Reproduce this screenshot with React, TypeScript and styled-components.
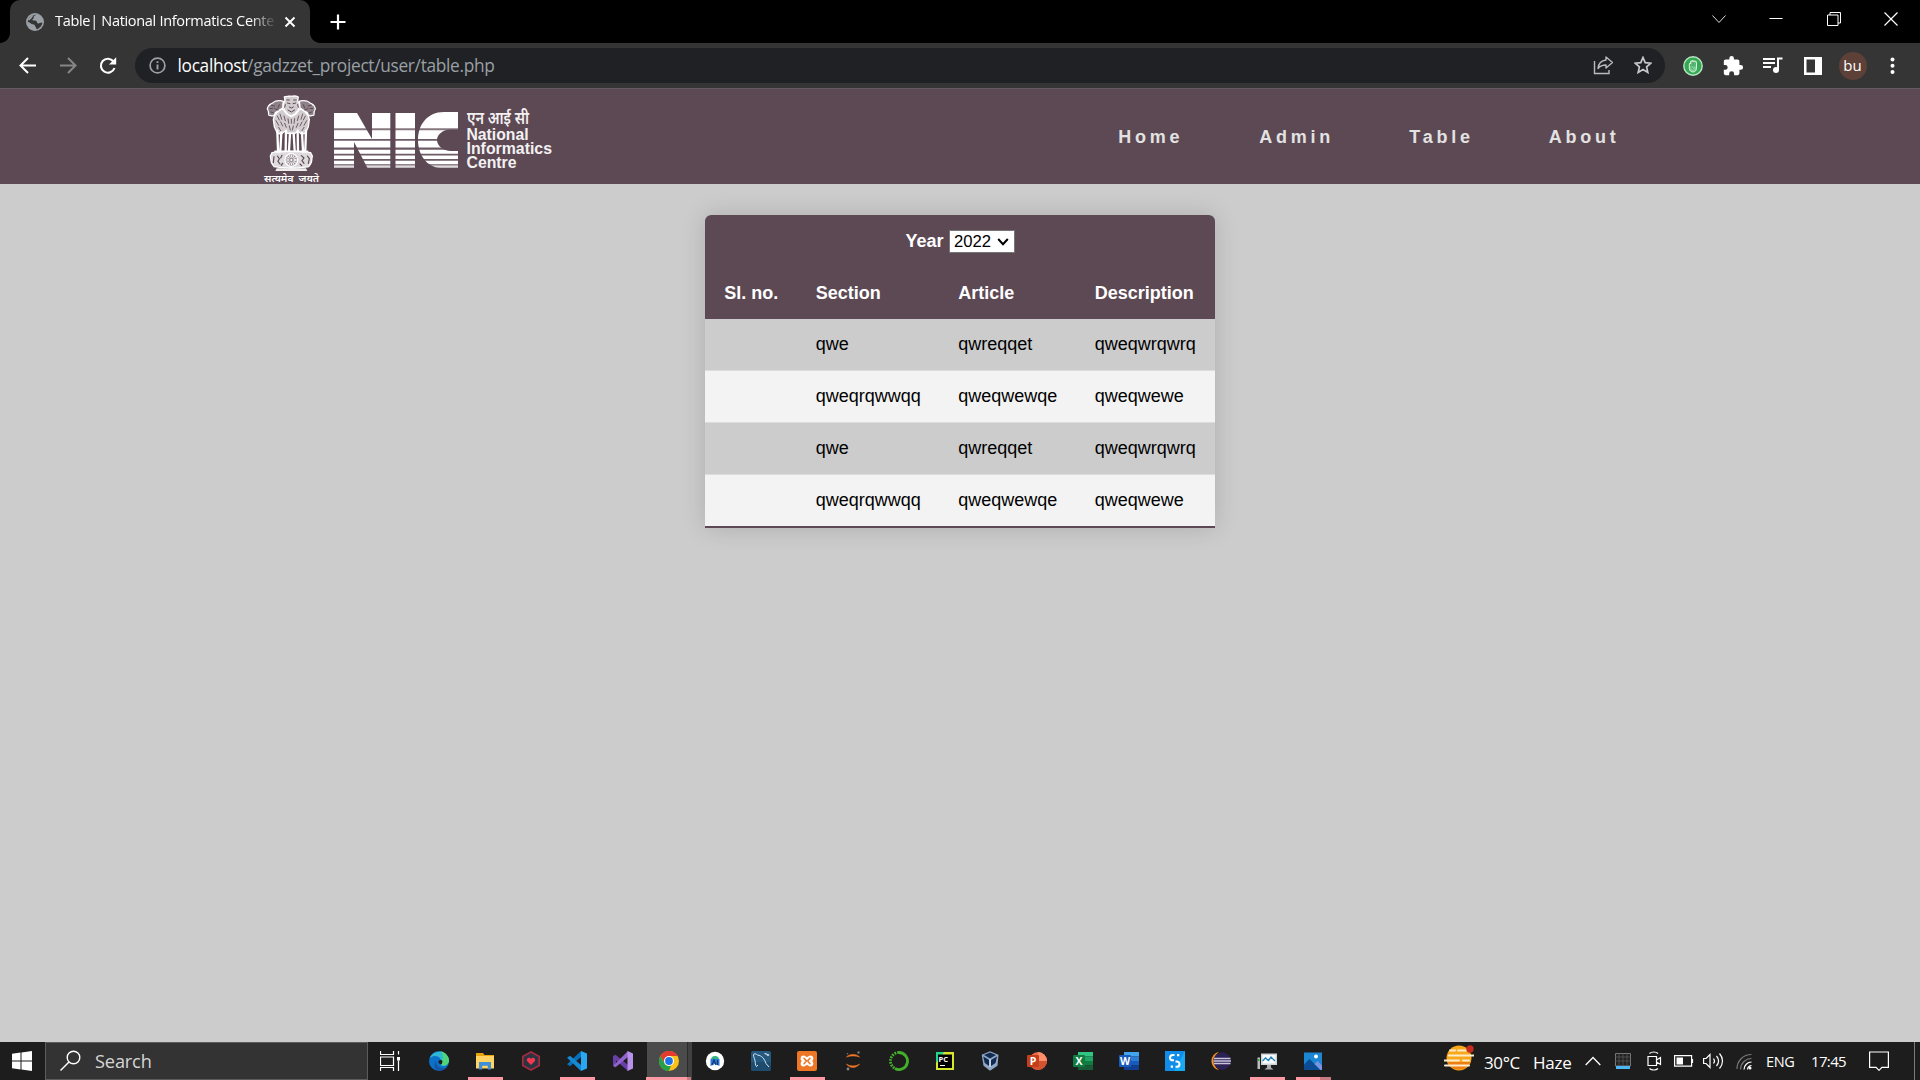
import React from 'react';
import styled, { createGlobalStyle } from 'styled-components';

const GlobalStyle = createGlobalStyle`
  * { box-sizing: border-box; }
  html, body { margin: 0; padding: 0; background: #ccc; }
  body { overflow: hidden; }
  svg { display: block; flex: none; }
`;

const ui = `"Open Sans", "Noto Sans", sans-serif`;
const plum = '#5d4954';

const Screen = styled.div`
  width: 1920px;
  height: 1080px;
  display: flex;
  flex-direction: column;
  overflow: hidden;
  background: #cccccc;
  font-family: "Liberation Sans", Arial, sans-serif;
`;

/* ---------- browser chrome ---------- */
const TabStrip = styled.div`
  height: 43px;
  flex: none;
  background: #000;
  display: flex;
  align-items: stretch;
`;
const TabShape = styled.div`
  width: 300px;
  background: #353535;
  border-radius: 10px 10px 0 0;
  display: flex;
  align-items: center;
  padding: 0 14px 0 16px;
`;
const TabFoot = styled.div<{ $side: 'left' | 'right' }>`
  width: 10px;
  height: 10px;
  align-self: flex-end;
  background: radial-gradient(circle at ${p => (p.$side === 'left' ? '0 0' : '100% 0')}, #000 9.5px, #353535 10.2px);
`;
const TabTitle = styled.div`
  width: 220px;
  margin-left: 11px;
  margin-top: -1px;
  overflow: hidden;
  white-space: nowrap;
  color: #fff;
  font: 14.5px/20px ${ui};
  letter-spacing: -0.31px;
  mask-image: linear-gradient(90deg, #000 195px, transparent 222px);
`;
const TabClose = styled.div`
  margin-left: 9px;
`;
const NewTab = styled.div`
  width: 35px;
  display: flex;
  align-items: center;
  justify-content: center;
`;
const WindowButtons = styled.div`
  margin-left: auto;
  display: flex;
`;
const WindowButton = styled.div`
  width: 57.5px;
  height: 37px;
  display: flex;
  align-items: center;
  justify-content: center;
`;
const Toolbar = styled.div`
  height: 46px;
  flex: none;
  background: #353535;
  border-bottom: 1px solid #635d60;
  display: flex;
  align-items: center;
  padding: 0 7.5px;
`;
const ToolSlot = styled.div<{ $w?: number }>`
  width: ${p => p.$w ?? 40}px;
  height: 40px;
  display: flex;
  flex: none;
  align-items: center;
  justify-content: center;
`;
const Omnibox = styled.div`
  height: 35px;
  width: 1530px;
  margin: -1px 7.5px 0 7.5px;
  flex: none;
  border-radius: 18px;
  background: #202124;
  display: flex;
  align-items: center;
  padding: 0 2.5px 0 14px;
`;
const Url = styled.div`
  flex: 1;
  margin-left: 11.5px;
  padding-top: 2px;
  color: #9aa0a6;
  font: 17.3px/24px ${ui};
  letter-spacing: -0.31px;
  span { color: #fff; }
`;
const Avatar = styled.div`
  width: 28px;
  height: 28px;
  border-radius: 50%;
  background: #5d4037;
  color: #fff;
  text-align: center;
  font: 15px/26px ${ui};
`;

/* ---------- page ---------- */
const Nav = styled.nav`
  height: 95px;
  flex: none;
  background: ${plum};
  display: flex;
  overflow: hidden;
`;
const Logo = styled.div`
  width: 320px;
  margin-left: 250px;
  color: #fff;
`;
const NavLinks = styled.div`
  margin-left: 548.3px;
  display: flex;
  align-items: center;
`;
const NavLink = styled.a<{ $w: number }>`
  width: ${p => p.$w}px;
  color: #e2e2e2;
  font-weight: bold;
  font-size: 18px;
  line-height: 24px;
  letter-spacing: 3.75px;
  white-space: nowrap;
`;
const Main = styled.main`
  flex: 1;
  display: flex;
  justify-content: center;
  align-items: flex-start;
  padding: 31.25px 0 0 0;
`;
const Table = styled.table`
  width: 493.3px;
  border-collapse: collapse;
  font-size: 18px;
  line-height: 20.75px;
  color: #000;
  border-radius: 6.25px 6.25px 0 0;
  overflow: hidden;
  box-shadow: 0 0 25px rgba(0, 0, 0, 0.15);
`;
const HeadRow = styled.tr`
  background: ${plum};
  color: #fff;
  text-align: left;
  height: 52px;
`;
const BodyRow = styled.tr<{ $even: boolean; $h: number; $last: boolean }>`
  height: ${p => p.$h}px;
  background: ${p => (p.$even ? '#f3f3f3' : '#cccccc')};
  border-bottom: ${p => (p.$last ? `2px solid ${plum}` : '1px solid #dddddd')};
`;
const HeadCell = styled.th`
  padding: 0 18.75px;
  white-space: nowrap;
`;
const Cell = styled.td`
  padding: 0 18.75px 1px;
  white-space: nowrap;
`;
const YearField = styled.div`
  display: flex;
  align-items: center;
  justify-content: center;
  gap: 5px;
`;
const YearSelect = styled.div`
  width: 66px;
  height: 23px;
  border: 1px solid #767676;
  background: #fff;
  color: #000;
  font-weight: normal;
  font-size: 16.67px;
  line-height: 21px;
  display: flex;
  align-items: center;
  justify-content: space-between;
  padding: 1px 5px 0 4.5px;
`;

/* ---------- taskbar ---------- */
const Taskbar = styled.div`
  height: 38px;
  flex: none;
  background: #1d1d1d;
  display: flex;
  font-family: ${ui};
  color: #fff;
`;
const StartButton = styled.div`
  width: 45px;
  display: flex;
  align-items: center;
  padding-left: 12px;
`;
const SearchBox = styled.div`
  width: 323px;
  border: 1px solid #5c5c5c;
  background: #333;
  display: flex;
  align-items: center;
  padding-left: 13px;
  gap: 14px;
  font-size: 18.2px;
  letter-spacing: -0.15px;
  color: #d6d6d6;
`;
const AppSlot = styled.div<{ $w?: number; $active?: boolean; $pull?: number }>`
  width: ${p => p.$w ?? 46}px;
  padding-top: 9px;
  padding-right: ${p => p.$pull ?? 0}px;
  display: flex;
  flex-direction: column;
  align-items: center;
  justify-content: space-between;
  background: ${p =>
    p.$active ? 'linear-gradient(90deg, transparent 1px, #4b4b4b 1px, #4b4b4b 41px, #2b2b2b 41px, #2b2b2b 42px, #404040 42px)' : 'none'};
`;
const Underline = styled.div<{ $w: number; $dim?: number }>`
  width: ${p => p.$w}px;
  height: 3px;
  background: linear-gradient(90deg, #ff99a4 ${p => p.$w - (p.$dim ?? 0)}px, #c87a84 0);
`;
const Tray = styled.div`
  margin-left: auto;
  display: flex;
`;
const TrayCell = styled.div<{ $w: number; $size?: number; $shift?: number; $ls?: number }>`
  width: ${p => p.$w}px;
  height: 38px;
  display: flex;
  align-items: center;
  font-size: ${p => p.$size ?? 15}px;
  letter-spacing: ${p => p.$ls ?? 0}px;
  padding-top: ${p => p.$shift ?? 0}px;
  white-space: nowrap;
`;
const ShowDesktop = styled.div`
  width: 6px;
  border-left: 1px solid #7a7a7a;
`;

const G = ({ w = 20, h = w, vb, children }: { w?: number; h?: number; vb?: string; children: React.ReactNode }) => (
  <svg width={w} height={h} viewBox={vb ?? `0 0 ${w} ${h}`} fill="none">
    {children}
  </svg>
);

const Emblem = () => (
  <g transform="translate(10 3) scale(.33333)" strokeLinecap="round" strokeLinejoin="round">
    {/* manes, bodies and legs */}
    <g fill="#fff" fillOpacity=".72" stroke="#fff" strokeWidth="4">
      <path d="M73 27l8-2 26-1 8 3-2 11 6 10-4 18-10 12-11 6-11-6-10-12-4-18 6-10z" strokeDasharray="9 3" />
      <path d="M70 40c-10-4-24-3-32 5-10 4-15 10-16 18 4 6 4 12 4 18l12 3 8-4 8-10 14-10zM118 40c10-4 24-3 32 5 10 4 15 10 16 18-4 6-4 12-4 18l-12 3-8-4-8-10-14-10z" fillOpacity=".3" strokeDasharray="10 3" />
      <path d="M46 74l22-12 12 16 14 8 14-8 12-16 22 12 6 20-3 22-9 20-12 2-10-8-10 6h-20l-10-6-10 8-12-2-9-20-3-22z" />
    </g>
    <g stroke="#fff" strokeWidth="7" strokeDasharray="22 2">
      <path d="M52 128l2 58M64 134l-3 54M78 128l-1 60M90 136l-3 52M101 136l3 52M113 128l1 60M126 134l3 54M138 128l-2 58" />
    </g>
    <path d="M45 190h98" stroke="#fff" strokeWidth="5" strokeDasharray="15 4" />
    {/* carved detail */}
    <g stroke={plum} strokeWidth="3">
      <path d="M80 36h8M101 36h8M82 45l8 2M107 45l-8 2M88 57l6 3 6-3M84 66l10 6 10-6M76 50l-2 8M113 50l2 8" />
      <path d="M34 52l10 2M30 62l8-1M44 62l10 4M32 72l8 2M154 52l-10 2M158 62l-8-1M144 62l-10 4M156 72l-8 2M58 50l-4 10M130 50l4 10" />
      <path d="M52 84l6 12M60 78l5 16M48 98l8 14M62 102l6 12M72 84l4 14M74 106l5 12M84 92l2 14M94 94v12M104 92l-2 14M116 84l-4 14M114 106l-5 12M126 102l-6 12M128 78l-5 16M136 84l-6 12M140 98l-8 14M88 114l3 12M100 114l-3 12M56 118l6 10M132 118l-6 10" strokeWidth="2.6" />
    </g>
    {/* abacus with the wheel */}
    <path d="M36 194q58-8 116 0l5 10-3 20-8 12q-52 8-104 0l-8-12-3-20z" fill="#fff" fillOpacity=".8" stroke="#fff" strokeWidth="4" strokeDasharray="12 3" />
    <path d="M42 206l-2 18M52 204l6 8-4 8 6 8M66 202l-4 8M124 203l8 7-6 8 6 8M142 204l6 8-3 14M68 226l-4 6M120 228l5 5" stroke={plum} strokeWidth="3.500" />
    <circle cx="94" cy="216" r="19" fill={plum} fillOpacity=".5" stroke="#fff" strokeWidth="4" />
    <circle cx="94" cy="216" r="11" stroke="#fff" strokeWidth="9" strokeDasharray="2.500 2.500" strokeLinecap="butt" />
    <circle cx="94" cy="216" r="3" fill="#fff" />
    <path d="M50 241h88l4 8H46z" fill="#fff" fillOpacity=".9" />
  </g>
);

const NicLogo = () => (
  <svg width="320" height="95" viewBox="0 4 320 95" fill="none">
    <Emblem />
    <text x="14" y="97.300" fill="#fff" fontFamily="'Noto Sans Devanagari','Noto Sans',sans-serif" fontWeight="600" fontSize="9.300" wordSpacing="2" textLength="55" lengthAdjust="spacingAndGlyphs">सत्यमेव जयते</text>
    {/* NIC letter forms with horizontal bands */}
    <g fill="#fff">
      <path d="M84 28h23l15 26V28h18.300v55H117.500l-13.500-26v26H84z" />
      <path d="M145.500 28H165v55h-19.500z" />
      <path d="M208 27v17.500h-7c-8 0-14 5-14 10.500s6 11 14 11h7v17h-18c-13-1-22-13-22-28s9-28 26-28z" />
    </g>
    <g fill={plum}>
      <path d="M82 43.300h128v2H82z" fillOpacity=".75" />
      <path d="M82 54h128v1.800H82zM82 62.500h128v2.300H82zM82 68.700h128v1.700H82zM82 74h128v1.700H82zM82 79.200h128v1.300H82z" fillOpacity=".9" />
      <path d="M82 81.500h128v2H82z" fillOpacity=".4" />
    </g>
    <g fill="#f3f1f2">
      <text x="217" y="38.500" fontFamily="'Noto Sans Devanagari','Noto Sans',sans-serif" fontWeight="600" fontSize="17" textLength="62" lengthAdjust="spacingAndGlyphs">एन आई सी</text>
      <g fontFamily="'Liberation Sans',sans-serif" fontWeight="bold" fontSize="16">
        <text x="216.500" y="54.700" textLength="62" lengthAdjust="spacingAndGlyphs">National</text>
        <text x="216.500" y="68.700" textLength="85.500" lengthAdjust="spacingAndGlyphs">Informatics</text>
        <text x="216.500" y="82.500" textLength="50" lengthAdjust="spacingAndGlyphs">Centre</text>
      </g>
    </g>
  </svg>
);

const OfficeIcon = ({ letter, tones, round }: { letter: string; tones: string[]; round?: boolean }) => (
  <G>
    {round ? (
      <>
        <circle cx="11" cy="10" r="9" fill={tones[0]} />
        <path d="M11 1a9 9 0 0 1 9 9h-9z" fill={tones[1]} />
        <path d="M2 10h18a9 9 0 0 1-18 0z" fill={tones[2]} />
      </>
    ) : (
      <>
        <path d="M5 1h15v4.500H5z" fill={tones[0]} />
        <path d="M5 5.500h15V10H5z" fill={tones[1]} />
        <path d="M5 10h15v4.500H5z" fill={tones[2]} />
        <path d="M5 14.500h15V19H5z" fill={tones[3]} />
      </>
    )}
    <rect x="0" y="4" width="12" height="12" rx="1" fill={tones[4]} />
    <text x="6" y="14" textAnchor="middle" fill="#fff" fontFamily="Open Sans, sans-serif" fontWeight="bold" fontSize="10.500">{letter}</text>
  </G>
);

const apps: { icon: React.ReactNode; line?: number; dim?: number; active?: boolean }[] = [
  {
    icon: (
      <G>
        <circle cx="10" cy="10" r="10" fill="#0c72c9" />
        <path d="M.5 8A10 10 0 0 1 20 9c0 4-3 6-6 6-2 0-3-1-2-3C13 8 10 5 6 5 3 5 1 6.500.5 8z" fill="#2fb8d4" />
        <path d="M11 .2A10 10 0 0 1 20 9c0 4-3 6-6 5.500-2-.5-2-1.500-1.500-3C13.500 8 16 4 11 .2z" fill="#4fd67a" />
        <path d="M7 10c0 5 4 8 10 7a10 10 0 0 1-7 3C4 19 5 12 7 10z" fill="#1656a6" />
        <path d="M9.500 10a2.500 2.500 0 0 1 4 0c0 1.500-1 2-.5 3-2 1-4-1-3.500-3z" fill="#1d1d1d" />
      </G>
    ),
  },
  {
    line: 35,
    icon: (
      <G>
        <path d="M1 2h7l1.500 2H19v5H1z" fill="#e8a40c" />
        <path d="M1 5h18v12.500H1z" fill="#ffd463" />
        <path d="M4 18.500V11h12v7.500h-3.200v-3.800H7.200v3.800z" fill="#3d8fd8" />
      </G>
    ),
  },
  {
    icon: (
      <G>
        <path d="M10 1l8.200 4.500v9L10 19l-8.200-4.500v-9z" fill="#293440" stroke="#a52b40" strokeWidth="1.700" />
        <path d="M10 14L6 10c-1-3 2.500-4.500 4-2 1.500-2.500 5-1 4 2z" fill="#f73650" />
      </G>
    ),
  },
  {
    line: 35,
    icon: (
      <G>
        <path d="M14 0v6L3 15.200 0 13.200z" fill="#0a6fb8" />
        <path d="M14 20v-6L3 4.800 0 6.800z" fill="#1688d4" />
        <path d="M14 0l6 2.500v15L14 20z" fill="#2aa7f2" />
      </G>
    ),
  },
  {
    icon: (
      <G>
        <path d="M0 5l2.500-1.200L15 14v6L3 9.500v4.500l-3 1z" fill="#6b3fa8" />
        <path d="M0 15l2.500 1.200L15 6V0L5 10z" fill="#9263cf" />
        <path d="M14.500 0L20 2.500v15L14.500 20z" fill="#b892ea" />
      </G>
    ),
  },
  {
    line: 45,
    dim: 4,
    active: true,
    icon: (
      <G>
        <circle cx="10" cy="10" r="10" fill="#fbc116" />
        <path d="M1.300 5A10 10 0 0 1 18.700 5H10L5.700 12.500z" fill="#e33b2e" />
        <path d="M1.300 5l4.400 7.500A5 5 0 0 0 12 14.500L10 20A10 10 0 0 1 1.300 5z" fill="#269f4b" />
        <circle cx="10" cy="10" r="5" fill="#fff" />
        <circle cx="10" cy="10" r="3.900" fill="#1b73e8" />
      </G>
    ),
  },
  {
    icon: (
      <G>
        <circle cx="10" cy="10" r="9.200" fill="#fff" />
        <path d="M6 9a4 4 0 0 1 8 0z" fill="#2fb582" />
        <path d="M5.500 8h9v7l-4.500-2-4.500 2z" fill="#2f78d8" />
        <path d="M7 14l2-5 2 5M12.500 9v5" stroke="#123a70" strokeWidth="1.200" />
      </G>
    ),
  },
  {
    icon: (
      <G>
        <rect width="20" height="20" rx="2" fill="#245a80" />
        <path d="M0 11h20v9H0z" fill="#1b4264" opacity=".6" />
        <path d="M5.500 15.500C4 14 4.500 12 4 9.500 3.500 7 1.500 4 3 3c1-.7 2.500.2 3.500 1 4.500.5 7 4 8.500 8.500l3 3.500M7 14l-1.500 1.500" stroke="#d9e6ef" strokeWidth="1" />
        <path d="M13.500 2.500l2 .5 1.500 1.500 1-1" stroke="#d9e6ef" strokeWidth="1.100" />
      </G>
    ),
  },
  {
    line: 35,
    icon: (
      <G>
        <rect width="20" height="20" rx="2" fill="#ee7725" />
        <path d="M6.500 4.500c1.700 0 2.300 1.500 3.500 1.500s1.800-1.500 3.500-1.500c3 0 3.700 3.700 1.700 5.500 2 1.800 1.300 5.500-1.700 5.500-1.700 0-2.300-1.500-3.500-1.500s-1.800 1.500-3.500 1.500c-3 0-3.700-3.700-1.700-5.500-2-1.800-1.300-5.500 1.700-5.500z" fill="#fff" />
        <path d="M7 7.200l2 2.300h2l2-2.300M7 12.800l2-2.300M13 12.800l-2-2.300" stroke="#ee7725" strokeWidth="1.500" strokeLinecap="round" />
      </G>
    ),
  },
  {
    icon: (
      <G>
        <path d="M3.500 6c3-3.500 10-3.500 13 0-3-1.500-10-1.500-13 0zM3.500 13c3 4.500 10 4.500 13 0-3 2.500-10 2.500-13 0z" fill="#f37726" stroke="#f37726" strokeWidth=".6" />
        <circle cx="15.500" cy="1.500" r="1.200" fill="#777" />
        <circle cx="4.500" cy="2.800" r=".8" fill="#777" />
        <circle cx="5" cy="18" r="1.400" fill="#888" />
      </G>
    ),
  },
  {
    icon: (
      <G>
        <path d="M10 1.500A8.500 8.500 0 1 1 6 17.500" stroke="#43b02a" strokeWidth="2.800" />
        <path d="M10 1.500A8.500 8.500 0 0 0 6 17.500" stroke="#43b02a" strokeWidth="2.800" strokeDasharray="1.800 1" />
      </G>
    ),
  },
  {
    icon: (
      <G>
        <path d="M1 1h9l9 0v18H1z" fill="#d6e72c" />
        <path d="M1 1h8L1 12z" fill="#21d789" />
        <rect x="3" y="3.500" width="14" height="13.500" fill="#000" />
        <text x="3.600" y="10.500" fill="#fff" fontFamily="Open Sans, sans-serif" fontWeight="bold" fontSize="7.500">PC</text>
        <path d="M5 14.500h5" stroke="#fff" />
      </G>
    ),
  },
  {
    icon: (
      <G>
        <path d="M9 .3l8.500 3.500-1 11L9 19.700l-6.500-5L.7 3.800z" fill="#8fa6c4" />
        <path d="M9 1.500l6 2.600L9 7.500 3 4.100z" fill="#122c50" />
        <path d="M2.200 5.500L8.200 9v6L3.800 12zM16 5.500L10 9v6l4.500-3z" fill="#0f2a4e" />
        <path d="M9 8v8" stroke="#dfe8f2" strokeWidth="1.300" />
      </G>
    ),
  },
  { icon: <OfficeIcon letter="P" round tones={['#ed6c47', '#ff8f6b', '#d35230', '', '#c43e1c']} /> },
  { icon: <OfficeIcon letter="X" tones={['#33c481', '#21a366', '#107c41', '#185c37', '#107c41']} /> },
  { icon: <OfficeIcon letter="W" tones={['#41a5ee', '#2b7cd3', '#185abd', '#103f91', '#185abd']} /> },
  {
    icon: (
      <G>
        <rect width="20" height="20" fill="#108de8" />
        <path d="M20 0v20H9z" fill="#18a9f2" />
        <path d="M9.500 4H8C4 4 4 9.300 8 9.300h1M10.500 15.800h1c4 0 4-5.300 0-5.300h-1" stroke="#fff" strokeWidth="2" />
        <path d="M12 3h2.300v2.300H12zM5.700 14.500H8v2.300H5.700z" fill="#fff" />
      </G>
    ),
  },
  {
    icon: (
      <G>
        <path d="M8 .7a9.500 9.500 0 0 0 0 18.600C2 14 2 6 8 .7z" fill="#f7941e" />
        <circle cx="11" cy="10" r="8.700" fill="#2c2255" />
        <path d="M3 7.500h16.500M2.500 10h17.500M3 12.500h16.500" stroke="#c9c5dc" strokeWidth="1.600" />
      </G>
    ),
  },
  {
    line: 35,
    icon: (
      <G>
        <path d="M4 2.500h16v11.500H4z" fill="#cfd4d6" />
        <path d="M5.500 4h13v8.500h-13z" fill="#f7fbfd" />
        <path d="M5.500 10l3-3 3 2.500 2.500-3.500 4 4" stroke="#2382b5" strokeWidth="1.300" />
        <path d="M10 14h4v2.500l2.500 2h-9l2.500-2z" fill="#a8acae" />
        <path d="M.5 6.500h2.500V18H.5z" fill="#bcbfc0" />
        <path d="M1 8h1.500v2H1z" fill="#2db52d" />
      </G>
    ),
  },
  {
    line: 35,
    dim: 11,
    icon: (
      <G>
        <path d="M1 1.500h18v17.500H1z" fill="#1b86d1" />
        <path d="M1 13.500L6.500 8 17.500 19H1z" fill="#0c4c94" />
        <path d="M11.500 13l3-3 4.500 4.500V19h-1.500z" fill="#7d93de" />
        <circle cx="13" cy="5.500" r="2" fill="#fff" />
      </G>
    ),
  },
];

const rows = [
  ['', 'qwe', 'qwreqqet', 'qweqwrqwrq'],
  ['', 'qweqrqwwqq', 'qweqwewqe', 'qweqwewe'],
  ['', 'qwe', 'qwreqqet', 'qweqwrqwrq'],
  ['', 'qweqrqwwqq', 'qweqwewqe', 'qweqwewe'],
];
const rowHeights = [51.5, 52, 52, 52.5];

export default function App() {
  return (
    <Screen>
      <GlobalStyle />
      <TabStrip>
        <TabFoot $side="left" />
        <TabShape>
          <G w={18}>
            <circle cx="9" cy="9" r="9" fill="#9aa0a6" />
            <path d="M10.500 1.800C8.800 2.200 7.500 3.200 7.700 4.700 7.500 6 6.300 5.800 6.500 7c.4 1 2.500.2 3.800.9 1.200.8.3 2 1.300 2.400 1.500.5 2.700-1.100 4.800-.9-.3 3-2.700 6-5.900 6.800 0-1.500-1-1.700-1.300-2.900-.2-1.300-1-1.900-2.500-2C5 11.300 4.500 9.300 1.800 9 1.800 5 6 1.200 10.500 1.800z" fill="#353535" />
            <path d="M2 7c1.500-3 3.500-4.700 6-5.200C6.500 3.500 6 5 4.500 6.200 4 7 3 7.500 2 7zM10 2l3.500 1 2 3.500-3 .7-2-1.700z" fill="#9aa0a6" />
          </G>
          <TabTitle>Table| National Informatics Center</TabTitle>
          <TabClose>
            <G w={12}><path d="M1.500 1.500l9 9M10.500 1.500l-9 9" stroke="#fff" strokeWidth="1.900" /></G>
          </TabClose>
        </TabShape>
        <TabFoot $side="right" />
        <NewTab>
          <G w={16}><path d="M8 .5v15M.5 8h15" stroke="#fff" strokeWidth="2.200" /></G>
        </NewTab>
        <WindowButtons>
          <WindowButton><G w={14}><path d="M.5 3.500l6.500 7 6.500-7" stroke="#ddd" /></G></WindowButton>
          <WindowButton><G w={14}><path d="M.5 6.500h13" stroke="#fff" /></G></WindowButton>
          <WindowButton><G w={14}><path d="M.5 3h10.500v10.500H.5zM3 3V.5h10.500V11H11" stroke="#fff" /></G></WindowButton>
          <WindowButton><G w={14}><path d="M.5.5l13 13M13.500.5l-13 13" stroke="#fff" strokeWidth="1.200" /></G></WindowButton>
        </WindowButtons>
      </TabStrip>

      <Toolbar>
        <ToolSlot><G w={18}><path d="M17 8.500H2M9 1L1.500 8.500 9 16" stroke="#fff" strokeWidth="2" /></G></ToolSlot>
        <ToolSlot><G w={18}><path d="M1 8.500h15M9 1l7.500 7.500L9 16" stroke="#868686" strokeWidth="2" /></G></ToolSlot>
        <ToolSlot>
          <G w={18}>
            <path d="M14.500 4.500A7 7 0 1 0 15.500 11" stroke="#fff" strokeWidth="2.100" />
            <path d="M17.200.3v7.200H10z" fill="#fff" />
          </G>
        </ToolSlot>
        <Omnibox>
          <G w={17}>
            <circle cx="8.500" cy="8.500" r="7.400" stroke="#9aa0a6" strokeWidth="1.700" />
            <path d="M8.500 7.500v5M8.500 4.200v1.900" stroke="#9aa0a6" strokeWidth="1.900" />
          </G>
          <Url><span>localhost</span>/gadzzet_project/user/table.php</Url>
          <ToolSlot>
            <G w={20}>
              <path d="M1.500 6v12.500h14.500V15" stroke="#b8babd" strokeWidth="1.400" />
              <path d="M13 2l6.500 5.500L13 13v-3c-4 0-6 1-8 3.500.5-5 3.500-8 8-8.500z" stroke="#b8babd" strokeWidth="1.400" strokeLinejoin="round" />
            </G>
          </ToolSlot>
          <ToolSlot>
            <G w={18}><path d="M9 1.500l2.200 5.200 5.600.5-4.200 3.700 1.200 5.500L9 13.500l-4.800 2.900 1.200-5.500L1.200 7.200l5.600-.5z" stroke="#c8c9cb" strokeWidth="1.700" /></G>
          </ToolSlot>
        </Omnibox>
        <ToolSlot>
          <G w={20}>
            <circle cx="10" cy="10" r="9.200" fill="#34a853" stroke="#b9e5c4" strokeWidth="1.400" />
            <path d="M6.300 12.500V8c0-1 1.300-1 1.300 0V5.500c0-1 1.400-1 1.400 0 0-1.400 1.500-1.400 1.500 0 0-1 1.500-1 1.500.2 0-.8 1.500-.8 1.500.6v6c0 2-1.400 3.700-3.400 3.700s-3.800-1.500-3.800-3.500z" fill="#7fd096" stroke="#e4f7e9" strokeWidth=".9" />
            <path d="M7.700 8v2.500M9.200 6v4.500M10.700 6v4.500M12.100 6.500v4M8 11.500l2.500 2" stroke="#2c8f47" strokeWidth=".7" />
          </G>
        </ToolSlot>
        <ToolSlot>
          <G w={22} vb="0 0 24 24"><path fill="#fff" d="M20.500 11H19V7c0-1.100-.9-2-2-2h-4V3.500a2.500 2.500 0 0 0-5 0V5H4c-1.100 0-2 .9-2 2v3.800h1.500a2.700 2.700 0 0 1 0 5.400H2V20c0 1.100.9 2 2 2h3.800v-1.500a2.700 2.700 0 0 1 5.400 0V22H17c1.100 0 2-.9 2-2v-4h1.500a2.500 2.500 0 0 0 0-5z" /></G>
        </ToolSlot>
        <ToolSlot>
          <G w={20}>
            <path d="M0 3h12M0 7h12M0 11h8" stroke="#fff" strokeWidth="1.900" />
            <path d="M15 14V2.500h4.500" stroke="#fff" strokeWidth="2" />
            <circle cx="13" cy="14" r="3" fill="#fff" />
          </G>
        </ToolSlot>
        <ToolSlot>
          <G w={18}><path d="M0 0h18v18H0zM2.500 2.500v13h8.500v-13z" fill="#fff" fillRule="evenodd" /></G>
        </ToolSlot>
        <ToolSlot><Avatar>bu</Avatar></ToolSlot>
        <ToolSlot>
          <G w={18}><g fill="#fff"><circle cx="8.500" cy="2.500" r="2" /><circle cx="8.500" cy="8.800" r="2" /><circle cx="8.500" cy="15" r="2" /></g></G>
        </ToolSlot>
      </Toolbar>

      <Nav>
        <Logo><NicLogo /></Logo>
        <NavLinks>
          <NavLink $w={141}>Home</NavLink>
          <NavLink $w={150}>Admin</NavLink>
          <NavLink $w={139.500}>Table</NavLink>
          <NavLink $w={100}>About</NavLink>
        </NavLinks>
      </Nav>

      <Main>
        <Table>
          <thead>
            <HeadRow>
              <HeadCell colSpan={4}>
                <YearField>
                  Year
                  <YearSelect>
                    2022
                    <G w={12}><path d="M1.200 3L6 8.200 10.800 3" stroke="#000" strokeWidth="2" /></G>
                  </YearSelect>
                </YearField>
              </HeadCell>
            </HeadRow>
            <HeadRow>
              <HeadCell>Sl. no.</HeadCell>
              <HeadCell>Section</HeadCell>
              <HeadCell>Article</HeadCell>
              <HeadCell>Description</HeadCell>
            </HeadRow>
          </thead>
          <tbody>
            {rows.map((r, i) => (
              <BodyRow key={i} $even={i % 2 === 1} $h={rowHeights[i]} $last={i === rows.length - 1}>
                {r.map((c, j) => <Cell key={j}>{c}</Cell>)}
              </BodyRow>
            ))}
          </tbody>
        </Table>
      </Main>

      <Taskbar>
        <StartButton>
          <G><path d="M0 2.800l8.500-1.200v7.900H0zM9.500 1.400L20 0v9.500H9.500zM0 10.500h8.500v7.900L0 17.200zM9.500 10.500H20V20L9.500 18.600z" fill="#fff" /></G>
        </StartButton>
        <SearchBox>
          <G w={22}><circle cx="14.500" cy="7.500" r="6.300" stroke="#fff" strokeWidth="1.400" /><path d="M10 12l-8.500 8.500" stroke="#fff" strokeWidth="1.400" /></G>
          Search
        </SearchBox>
        <AppSlot $w={48} $pull={4}>
          <G><path d="M.5 0v3.500h13V0M.5 6h13v8.500H.5zM.5 20v-3.500h13V20M18.500 0v3.500M18.500 9.500V20" stroke="#fff" strokeWidth="1.200" /><path d="M17 6h3v3.500h-3z" fill="#fff" /></G>
        </AppSlot>
        {apps.map((a, i) => (
          <AppSlot key={i} $active={a.active} $pull={a.active ? 1 : 0}>
            {a.icon}
            {a.line && <Underline $w={a.line} $dim={a.dim} />}
          </AppSlot>
        ))}
        <Tray>
          <TrayCell $w={40}>
            <G w={30} h={32}>
              <circle cx="15" cy="13" r="12.500" fill="#f9a81c" />
              <path d="M3.500 17a12.500 12.500 0 0 0 23 0z" fill="#ee7d12" />
              <path d="M6 5.500h5M14 5.500h8M5 10.500h25M0 15.500h15M19 15.500h6M1 20.500h24" stroke="#fdeccc" strokeWidth="2" strokeLinecap="round" />
              <circle cx="26" cy="4" r="3.700" fill="#c42b1c" />
            </G>
          </TrayCell>
          <TrayCell $w={49} $size={17} $shift={2.5} $ls={-0.4}>30°C</TrayCell>
          <TrayCell $w={52} $size={17} $shift={2.5} $ls={-0.2}>Haze</TrayCell>
          <TrayCell $w={30}><G w={16}><path d="M.7 12l7.300-7.500 7.300 7.500" stroke="#fff" strokeWidth="1.300" /></G></TrayCell>
          <TrayCell $w={32}>
            <G w={16} h={17}>
              <path d="M.5.5h15v12.500H.5z" fill="#222" stroke="#777" />
              <path d="M4 0v13M8 0v13M12 0v13M0 4h16M0 8h16" stroke="#5b5b5b" strokeWidth=".7" />
              <path d="M1 13h14v3H1z" fill="#4cb7f5" />
            </G>
          </TrayCell>
          <TrayCell $w={27}>
            <G w={15} h={20}>
              <path d="M1 5.500h8.500v9H1zM9.500 9l4-2.500v7l-4-2.500zM2.500 2.500c2-2 6.500-2 8.500 0M2.500 17.500c2 2 6.500 2 8.500 0" stroke="#fff" strokeWidth="1.200" />
            </G>
          </TrayCell>
          <TrayCell $w={29}><G w={20} h={12}><path d="M.6.600h17v10.500H.6zM18.500 4v4" stroke="#fff" strokeWidth="1.200" /><path d="M2.500 2.500h6.500v7H2.500z" fill="#fff" /></G></TrayCell>
          <TrayCell $w={33}>
            <G w={21} h={18}>
              <path d="M.6 6.500h2.500L7 2.500v13l-3.900-4H.6z" stroke="#fff" strokeWidth="1.200" />
              <path d="M10.500 6.500c1.200 1.500 1.200 3.500 0 5M13.500 4c2.500 3 2.500 7 0 10M16.500 1.500c4 4.500 4 10.500 0 15" stroke="#fff" strokeWidth="1.200" />
            </G>
          </TrayCell>
          <TrayCell $w={30}>
            <G w={16} h={17}>
              <path d="M1 16C1 8 7 1.500 15.500 1.500M4.500 16.500c0-6 5-11 11-11" stroke="#777" strokeWidth="1.200" />
              <path d="M8 16.500c0-4 3.500-7.500 7.500-7.500M11.500 16.500c0-2 2-4 4-4" stroke="#fff" strokeWidth="1.200" />
              <circle cx="14" cy="15" r="1.500" fill="#fff" />
            </G>
          </TrayCell>
          <TrayCell $w={45} $size={14.500} $ls={-0.300}>ENG</TrayCell>
          <TrayCell $w={58} $size={15} $ls={-0.650}>17:45</TrayCell>
          <TrayCell $w={45}><G><path d="M.6 1h18.800v15.400h-6.500L10 19.300l-2.900-2.900H.6z" stroke="#fff" strokeWidth="1.200" /></G></TrayCell>
          <ShowDesktop />
        </Tray>
      </Taskbar>
    </Screen>
  );
}
